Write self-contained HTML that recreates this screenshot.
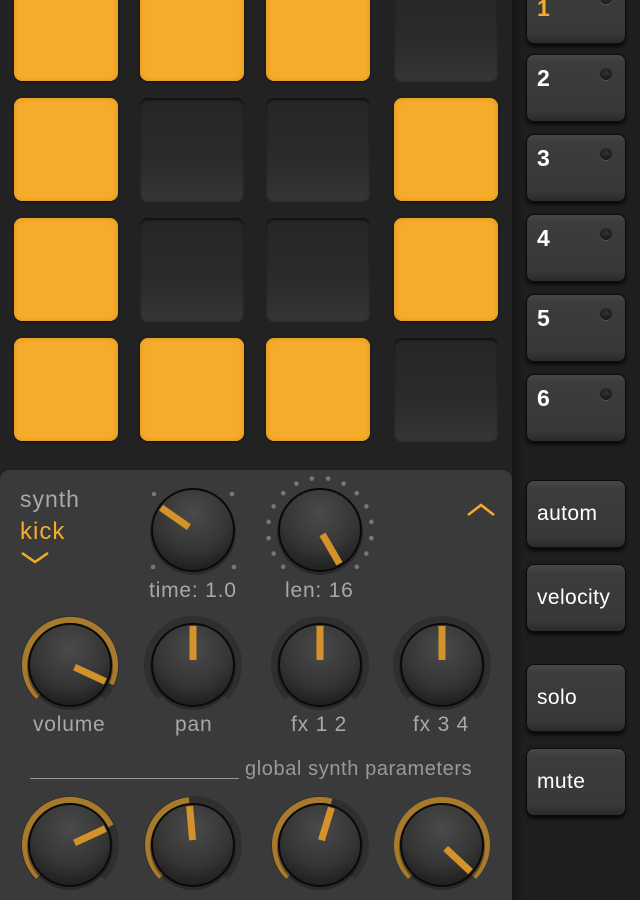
<!DOCTYPE html>
<html><head><meta charset="utf-8"><style>
*{margin:0;padding:0;box-sizing:border-box}
body{width:640px;height:900px;overflow:hidden;background:#222;font-family:"Liberation Sans",sans-serif;position:relative}
.pad{position:absolute;width:104px;height:103px;border-radius:8px}
.on{background:#f6ac2b;box-shadow:inset 0 0 6px rgba(180,110,0,.35),0 1px 2px rgba(0,0,0,.5)}
.off{background:linear-gradient(#262626,#2b2b2b 60%,#353535);box-shadow:inset 0 2px 2px rgba(0,0,0,.6),0 1px 1px rgba(255,255,255,.06)}
#side{position:absolute;left:512px;top:0;width:128px;height:900px;background:linear-gradient(90deg,#161616,#1e1e1e 12px,#1e1e1e)}
.btn{position:absolute;left:526px;width:100px;height:68px;border-radius:8px;background:linear-gradient(#484848,#3c3c3c 12%,#383838 85%,#2a2a2a);border:1px solid #0c0c0c;box-shadow:0 3px 3px rgba(0,0,0,.7);color:#fff}
.num{position:absolute;left:10px;top:10px;font-size:23px;font-weight:bold}
.dot{position:absolute;left:73px;top:13px;width:12px;height:12px;border-radius:50%;background:radial-gradient(circle at 50% 40%,#333,#111);box-shadow:0 1px 1px rgba(255,255,255,.15)}
.lbl{position:absolute;left:10px;top:21px;font-size:21px;letter-spacing:.4px}
#panel{position:absolute;left:0;top:470px;width:512px;height:430px;background:#3a3a3a;border-radius:10px 10px 0 0}
.t{position:absolute;color:#a8a8a8;font-size:21px;letter-spacing:.8px}
</style></head><body>
<div class="pad on" style="left:14px;top:-22px"></div>
<div class="pad on" style="left:140px;top:-22px"></div>
<div class="pad on" style="left:266px;top:-22px"></div>
<div class="pad off" style="left:394px;top:-22px"></div>
<div class="pad on" style="left:14px;top:98px"></div>
<div class="pad off" style="left:140px;top:98px"></div>
<div class="pad off" style="left:266px;top:98px"></div>
<div class="pad on" style="left:394px;top:98px"></div>
<div class="pad on" style="left:14px;top:218px"></div>
<div class="pad off" style="left:140px;top:218px"></div>
<div class="pad off" style="left:266px;top:218px"></div>
<div class="pad on" style="left:394px;top:218px"></div>
<div class="pad on" style="left:14px;top:338px"></div>
<div class="pad on" style="left:140px;top:338px"></div>
<div class="pad on" style="left:266px;top:338px"></div>
<div class="pad off" style="left:394px;top:338px"></div>

<div id="side"></div>
<div class="btn" style="top:-24px"><span class="num" style="top:18px;color:#f6ac2b">1</span><span class="dot" style="top:15px"></span></div>
<div class="btn" style="top:54px"><span class="num">2</span><span class="dot"></span></div>
<div class="btn" style="top:134px"><span class="num">3</span><span class="dot"></span></div>
<div class="btn" style="top:214px"><span class="num">4</span><span class="dot"></span></div>
<div class="btn" style="top:294px"><span class="num">5</span><span class="dot"></span></div>
<div class="btn" style="top:374px"><span class="num">6</span><span class="dot"></span></div>
<div class="btn" style="top:480px"><span class="lbl">autom</span></div>
<div class="btn" style="top:564px"><span class="lbl">velocity</span></div>
<div class="btn" style="top:664px"><span class="lbl">solo</span></div>
<div class="btn" style="top:748px"><span class="lbl">mute</span></div>

<div id="panel"></div>
<div class="t" style="left:20px;top:486px;font-size:23px;letter-spacing:1px">synth</div>
<div class="t" style="left:20px;top:518px;font-size:24px;letter-spacing:1px;color:#f6ac2b">kick</div>
<div class="t" style="left:149px;top:579px">time: 1.0</div>
<div class="t" style="left:285px;top:579px">len: 16</div>
<div class="t" style="left:33px;top:713px">volume</div>
<div class="t" style="left:175px;top:713px">pan</div>
<div class="t" style="left:291px;top:713px">fx 1 2</div>
<div class="t" style="left:413px;top:713px">fx 3 4</div>
<div class="t" style="left:245px;top:758px;font-size:20px;letter-spacing:.6px;color:#999">global synth parameters</div>
<div style="position:absolute;left:30px;top:778px;width:209px;height:1px;background:#999"></div>

<svg width="640" height="900" style="position:absolute;left:0;top:0" xmlns="http://www.w3.org/2000/svg">
<defs>
<radialGradient id="kg" cx="50%" cy="30%" r="75%"><stop offset="0" stop-color="#4a4a4a"/><stop offset=".6" stop-color="#353535"/><stop offset="1" stop-color="#1a1a1a"/></radialGradient>
<g id="knob"><circle r="43" fill="#1a1a1a" opacity=".5" cy="2"/><circle r="41" fill="url(#kg)" stroke="#0a0a0a" stroke-width="2"/></g>
<g id="ptr"><rect x="-3.5" y="-39" width="7" height="34" fill="#d4922a"/></g>
</defs>
<g fill="none" stroke="#f6ac2b" stroke-width="2.5"><path d="M22 553 L35 562 L48 553"/><path d="M468 515 L481 505 L494 515"/></g>
<g fill="#777">
<circle cx="154" cy="494" r="2.3"/><circle cx="232" cy="494" r="2.3"/><circle cx="153" cy="567" r="2.3"/><circle cx="234" cy="567" r="2.3"/>
</g>
<g fill="#777" transform="translate(320,530)">
<circle r="2.3" transform="rotate(-135) translate(0,-52)"/><circle r="2.3" transform="rotate(-117) translate(0,-52)"/><circle r="2.3" transform="rotate(-99) translate(0,-52)"/><circle r="2.3" transform="rotate(-81) translate(0,-52)"/><circle r="2.3" transform="rotate(-63) translate(0,-52)"/><circle r="2.3" transform="rotate(-45) translate(0,-52)"/><circle r="2.3" transform="rotate(-27) translate(0,-52)"/><circle r="2.3" transform="rotate(-9) translate(0,-52)"/><circle r="2.3" transform="rotate(9) translate(0,-52)"/><circle r="2.3" transform="rotate(27) translate(0,-52)"/><circle r="2.3" transform="rotate(45) translate(0,-52)"/><circle r="2.3" transform="rotate(63) translate(0,-52)"/><circle r="2.3" transform="rotate(81) translate(0,-52)"/><circle r="2.3" transform="rotate(99) translate(0,-52)"/><circle r="2.3" transform="rotate(117) translate(0,-52)"/><circle r="2.3" transform="rotate(135) translate(0,-52)"/>
</g>
<g transform="translate(193,530)"><use href="#knob"/><use href="#ptr" transform="rotate(-55)"/></g>
<g transform="translate(320,530)"><use href="#knob"/><use href="#ptr" transform="rotate(150)"/></g>
<g transform="translate(70,665)"><path d="M-31.8 31.8 A45 45 0 1 1 31.8 31.8" fill="none" stroke="#2f2f2f" stroke-width="8"/><path d="M-31.8 31.8 A45 45 0 1 1 40.8 19" fill="none" stroke="#a87a2c" stroke-width="6"/><use href="#knob"/><use href="#ptr" transform="rotate(115)"/></g>
<g transform="translate(193,665)"><path d="M-31.8 31.8 A45 45 0 1 1 31.8 31.8" fill="none" stroke="#2f2f2f" stroke-width="8"/><use href="#knob"/><use href="#ptr"/></g>
<g transform="translate(320,665)"><path d="M-31.8 31.8 A45 45 0 1 1 31.8 31.8" fill="none" stroke="#2f2f2f" stroke-width="8"/><use href="#knob"/><use href="#ptr"/></g>
<g transform="translate(442,665)"><path d="M-31.8 31.8 A45 45 0 1 1 31.8 31.8" fill="none" stroke="#2f2f2f" stroke-width="8"/><use href="#knob"/><use href="#ptr"/></g>
<g transform="translate(70,845)"><path d="M-31.8 31.8 A45 45 0 1 1 31.8 31.8" fill="none" stroke="#2f2f2f" stroke-width="8"/><path d="M-31.8 31.8 A45 45 0 1 1 40.8 -19" fill="none" stroke="#a87a2c" stroke-width="6"/><use href="#knob"/><use href="#ptr" transform="rotate(65)"/></g>
<g transform="translate(193,845)"><path d="M-31.8 31.8 A45 45 0 1 1 31.8 31.8" fill="none" stroke="#2f2f2f" stroke-width="8"/><path d="M-31.8 31.8 A45 45 0 0 1 -3.9 -44.8" fill="none" stroke="#a87a2c" stroke-width="6"/><use href="#knob"/><use href="#ptr" transform="rotate(-5)"/></g>
<g transform="translate(320,845)"><path d="M-31.8 31.8 A45 45 0 1 1 31.8 31.8" fill="none" stroke="#2f2f2f" stroke-width="8"/><path d="M-31.8 31.8 A45 45 0 0 1 11.6 -43.5" fill="none" stroke="#a87a2c" stroke-width="6"/><use href="#knob"/><use href="#ptr" transform="rotate(17)"/></g>
<g transform="translate(442,845)"><path d="M-31.8 31.8 A45 45 0 1 1 31.8 31.8" fill="none" stroke="#a87a2c" stroke-width="6"/><use href="#knob"/><use href="#ptr" transform="rotate(133)"/></g>
</svg>
</body></html>
